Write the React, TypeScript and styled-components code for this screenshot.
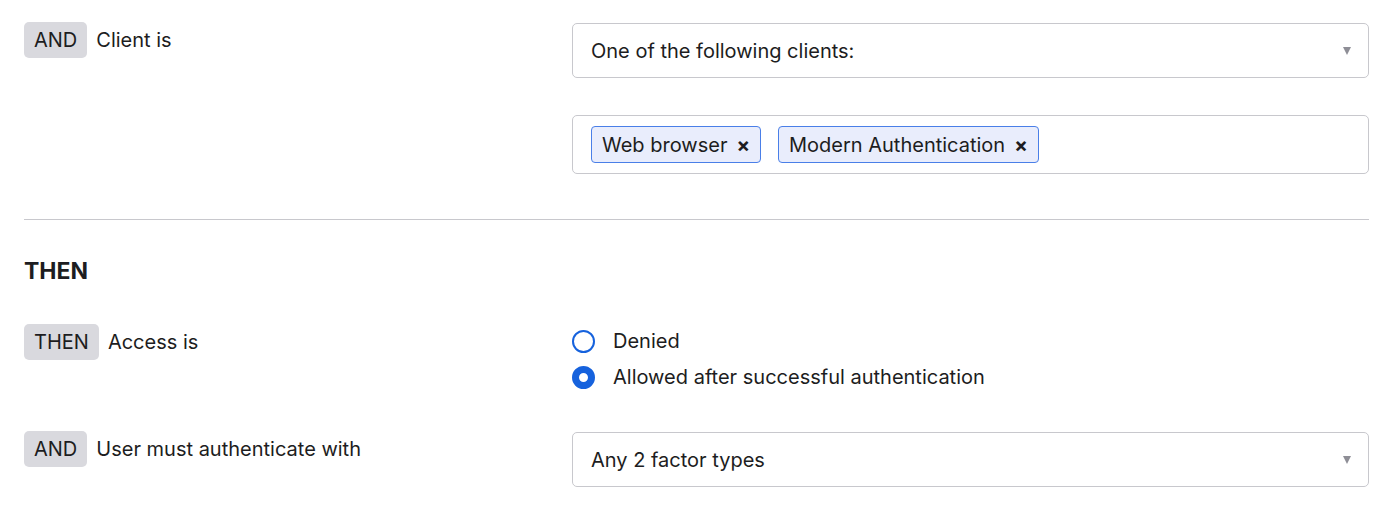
import styled, { createGlobalStyle } from "styled-components";

const GlobalStyle = createGlobalStyle`
  body {
    margin: 0;
    background: #ffffff;
    font-family: Inter, "Noto Sans", Arial, sans-serif;
    color: #1d1d21;
  }
`;

const Page = styled.div`
  padding: 22px 31px 0 24px;
`;

const Row = styled.div<{ $top?: number }>`
  display: grid;
  grid-template-columns: 548px 1fr;
  align-items: start;
  margin-top: ${(p) => p.$top ?? 0}px;
`;

const Label = styled.div`
  display: flex;
  align-items: center;
  gap: 9px;
  font-size: 20px;
  line-height: 36px;
`;

const Badge = styled.span`
  display: inline-flex;
  align-items: center;
  height: 36px;
  padding: 0 10px;
  border-radius: 5px;
  background: #d9d9de;
  font-size: 20px;
`;

const Field = styled.div`
  display: flex;
  flex-direction: column;
  gap: 37px;
  margin-top: 1px;
`;

const Select = styled.div`
  display: flex;
  align-items: center;
  justify-content: space-between;
  height: 55px;
  box-sizing: border-box;
  padding: 0 17px 0 18px;
  border: 1px solid #c8c8cd;
  border-radius: 5px;
  font-size: 20px;
`;

const Caret = styled.span`
  width: 0;
  height: 0;
  border-left: 4.5px solid transparent;
  border-right: 4.5px solid transparent;
  border-top: 8px solid #8e8e96;
`;

const TagBox = styled.div`
  display: flex;
  align-items: center;
  gap: 17px;
  height: 59px;
  box-sizing: border-box;
  padding: 0 18px;
  border: 1px solid #c8c8cd;
  border-radius: 5px;
`;

const Tag = styled.span`
  display: inline-flex;
  align-items: center;
  gap: 9px;
  height: 37px;
  box-sizing: border-box;
  padding: 0 10px;
  border: 1.5px solid #4a7fe8;
  border-radius: 4px;
  background: #e9edfc;
  font-size: 20px;
`;

const Remove = styled.span`
  font-size: 20px;
  font-weight: 700;
`;

const Divider = styled.hr`
  margin: 45px 0 0;
  border: 0;
  border-top: 1px solid #c8c8cd;
`;

const Heading = styled.h2`
  margin: 39px 0 0;
  font-size: 23px;
  line-height: 24px;
  font-weight: 700;
`;

const Radios = styled.div`
  display: flex;
  flex-direction: column;
  margin-top: -1px;
`;

const RadioItem = styled.label`
  display: flex;
  align-items: center;
  gap: 18px;
  height: 36px;
  font-size: 20px;
`;

const RadioDot = styled.span<{ $checked?: boolean }>`
  width: 23px;
  height: 23px;
  box-sizing: border-box;
  border-radius: 50%;
  border: ${(p) => (p.$checked ? "7px" : "2.5px")} solid #1662dd;
  background: #ffffff;
`;

export default function App() {
  return (
    <>
      <GlobalStyle />
      <Page>
        <Row>
          <Label>
            <Badge>AND</Badge>
            Client is
          </Label>
          <Field>
            <Select>
              One of the following clients:
              <Caret />
            </Select>
            <TagBox>
              <Tag>
                Web browser <Remove>×</Remove>
              </Tag>
              <Tag>
                Modern Authentication <Remove>×</Remove>
              </Tag>
            </TagBox>
          </Field>
        </Row>
        <Divider />
        <Heading>THEN</Heading>
        <Row $top={41}>
          <Label>
            <Badge>THEN</Badge>
            Access is
          </Label>
          <Radios>
            <RadioItem>
              <RadioDot />
              Denied
            </RadioItem>
            <RadioItem>
              <RadioDot $checked />
              Allowed after successful authentication
            </RadioItem>
          </Radios>
        </Row>
        <Row $top={36}>
          <Label>
            <Badge>AND</Badge>
            User must authenticate with
          </Label>
          <Field>
            <Select>
              Any 2 factor types
              <Caret />
            </Select>
          </Field>
        </Row>
      </Page>
    </>
  );
}
